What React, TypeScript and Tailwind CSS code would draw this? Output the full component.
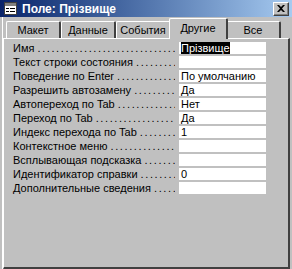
import React from 'react'

//Types
interface Prop {
    label: string
    value?: string
    selected?: boolean
}

//Data
const tabs = ['Макет', 'Данные', 'События', 'Другие', 'Все']
const activeTab = 3

const props: Prop[] = [
    { label: 'Имя', value: 'Прізвище', selected: true },
    { label: 'Текст строки состояния' },
    { label: 'Поведение по Enter', value: 'По умолчанию' },
    { label: 'Разрешить автозамену', value: 'Да' },
    { label: 'Автопереход по Tab', value: 'Нет' },
    { label: 'Переход по Tab', value: 'Да' },
    { label: 'Индекс перехода по Tab', value: '1' },
    { label: 'Контекстное меню' },
    { label: 'Всплывающая подсказка' },
    { label: 'Идентификатор справки', value: '0' },
    { label: 'Дополнительные сведения' },
]

const DOTS = '.'.repeat(60)

const TitleIcon = () => (
    <svg width="13" height="13" viewBox="0 0 13 13">
        <rect x="0.5" y="0.5" width="12" height="12" fill="#ffffff" stroke="#404040" />
        <rect x="1" y="1" width="11" height="3" fill="#808080" />
        <rect x="2" y="6" width="3" height="1" fill="#000" />
        <rect x="6" y="6" width="5" height="1" fill="#000" />
        <rect x="2" y="9" width="3" height="1" fill="#000" />
        <rect x="6" y="9" width="5" height="1" fill="#000" />
    </svg>
)

const CloseButton = () => (
    <div className="flex h-[14px] w-[16px] items-center justify-center border border-t-white border-l-white border-r-[#404040] border-b-[#404040] bg-[#c0c0c0] shadow-[inset_-1px_-1px_0_#808080]">
        <svg width="8" height="7" viewBox="0 0 8 7">
            <path d="M0 0 L2 0 L4 2 L6 0 L8 0 L5 3.5 L8 7 L6 7 L4 5 L2 7 L0 7 L3 3.5 Z" fill="#000" />
        </svg>
    </div>
)

const Row = ({ label, value, selected }: Prop) => (
    <div className="flex h-[14px] items-center">
        <div className="flex w-[175px] shrink-0 overflow-hidden whitespace-nowrap pl-[9px] pr-[4px] leading-[14px]">
            <span>{label}&nbsp;</span>
            <span className="min-w-0 flex-1 overflow-hidden tracking-[1.6px]">{DOTS}</span>
        </div>
        <div className="h-[12px] w-[87px] shrink-0 overflow-hidden whitespace-nowrap bg-white pl-[2px] leading-[12px]">
            {selected ? <span className="bg-black text-white">{value}</span> : value}
        </div>
    </div>
)

export default function App() {
    return (
        <div className="relative h-[269px] w-[292px] overflow-hidden bg-[#c0c0c0] font-['Liberation_Sans',sans-serif] text-[11px] text-black">
            {/* Title bar */}
            <div className="flex h-[17px] items-center bg-gradient-to-r from-[#0a246a] to-[#a6caf0] pl-[4px] pr-[3px]">
                <TitleIcon />
                <span className="ml-[5px] text-[12px] font-bold text-white">Поле: Прізвище</span>
                <div className="ml-auto">
                    <CloseButton />
                </div>
            </div>

            <div className="ml-[2px] flex h-[252px] flex-col border-l border-white pr-[2px]">
                {/* Tabs */}
                <div className="flex h-[21px] items-end pl-[3px]">
                    {tabs.map((t, i) =>
                        i === activeTab ? (
                            <div
                                key={t}
                                className="relative z-10 -mx-[2px] -mb-[1px] flex h-[21px] w-[59px] items-center justify-center rounded-t-[2px] border-l border-t border-white border-r-2 border-r-[#404040] bg-[#c0c0c0] pb-[2px]"
                            >
                                {t}
                            </div>
                        ) : (
                            <div
                                key={t}
                                className="flex h-[17px] w-[55px] items-center justify-center rounded-t-[2px] border-l border-t border-white border-r-2 border-r-[#404040] pt-[1px]"
                            >
                                {t}
                            </div>
                        )
                    )}
                </div>

                {/* Panel */}
                <div className="flex flex-1 flex-col border-l border-t border-white border-r-2 border-b-2 border-r-[#404040] border-b-[#404040] pt-[2px]">
                    {props.map(p => (
                        <Row key={p.label} {...p} />
                    ))}
                </div>
            </div>

            {/* Bottom edge */}
            <div className="h-[2px] bg-[#c0c0c0]" />
            <div className="h-[6px] border-t border-[#404040] bg-[#8c8c8c]" />
        </div>
    )
}
